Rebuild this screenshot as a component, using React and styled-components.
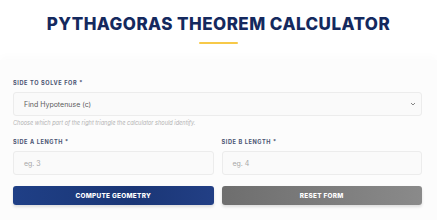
import React from 'react';
import styled, { createGlobalStyle } from 'styled-components';

const GlobalStyle = createGlobalStyle`
    body{
        margin: 0;
        background: #ffffff;
        font-family: "Inter", "Noto Sans", sans-serif;
    }
`

const Header = styled.header`
    display: flex;
    flex-direction: column;
    align-items: center;
    padding-top: 12px;
    height: 48px;

    h1{
        margin: 0;
        font-size: 17px;
        line-height: 24px;
        font-weight: 800;
        letter-spacing: 0.45px;
        color: #14295e;
    }

    span{
        display: block;
        width: 39px;
        height: 2px;
        margin-top: 6px;
        background: #f7c948;
        border-radius: 1px;
    }
`

const Form = styled.form`
    background: #fcfcfc;
    box-shadow: 0 -4px 8px rgba(0, 0, 0, 0.015);
    padding: 19px 15px 15px 13px;
    height: 160px;
    box-sizing: border-box;
`

const Label = styled.label`
    display: block;
    font-size: 5.6px;
    line-height: 8px;
    font-weight: 700;
    letter-spacing: 0.6px;
    text-transform: uppercase;
    color: #4a5372;
    margin-bottom: 5px;
`

const Field = styled.div`
    position: relative;
    height: 24px;
    box-sizing: border-box;
    border: 1px solid #ececec;
    border-radius: 3px;
    background: #fafafa;
    display: flex;
    align-items: center;
    padding: 0 10px;
    font-size: 7px;
    color: ${p => p.$muted ? '#a8a8a8' : '#5a5a5a'};

    svg{
        position: absolute;
        right: 5px;
        top: 9px;
    }
`

const Help = styled.p`
    margin: 4px 0 0;
    font-size: 5.6px;
    line-height: 7px;
    font-style: italic;
    color: #b3b3b3;
`

const Grid = styled.div`
    display: grid;
    grid-template-columns: 1fr 1fr;
    column-gap: 8px;
    margin-top: 11px;
`

const Button = styled.button`
    margin-top: 11px;
    height: 19px;
    border: none;
    border-radius: 3px;
    font-family: inherit;
    font-size: 6.4px;
    font-weight: 800;
    letter-spacing: 0.3px;
    color: #fff;
    background: ${p => p.$reset
        ? 'linear-gradient(90deg, #6e6e6e, #8a8a8a)'
        : 'linear-gradient(90deg, #1f3f86, #1a3676 60%, #223f85)'};
    box-shadow: 0 2px 3px rgba(0, 0, 0, 0.12);
`

const Col = styled.div`
    display: flex;
    flex-direction: column;
`

function App() {
    return (
        <>
            <GlobalStyle />
            <Header>
                <h1>PYTHAGORAS THEOREM CALCULATOR</h1>
                <span />
            </Header>
            <Form onSubmit={e => e.preventDefault()}>
                <Label>Side to solve for *</Label>
                <Field>
                    Find Hypotenuse (c)
                    <svg width="6" height="4" viewBox="0 0 6 4">
                        <path d="M1 1 L3 3 L5 1" fill="none" stroke="#777" strokeWidth="0.9" />
                    </svg>
                </Field>
                <Help>Choose which part of the right triangle the calculator should identify.</Help>
                <Grid>
                    <Col>
                        <Label>Side A length *</Label>
                        <Field $muted>eg. 3</Field>
                        <Button type="submit">COMPUTE GEOMETRY</Button>
                    </Col>
                    <Col>
                        <Label>Side B length *</Label>
                        <Field $muted>eg. 4</Field>
                        <Button type="button" $reset>RESET FORM</Button>
                    </Col>
                </Grid>
            </Form>
        </>
    );
}

export default App;
